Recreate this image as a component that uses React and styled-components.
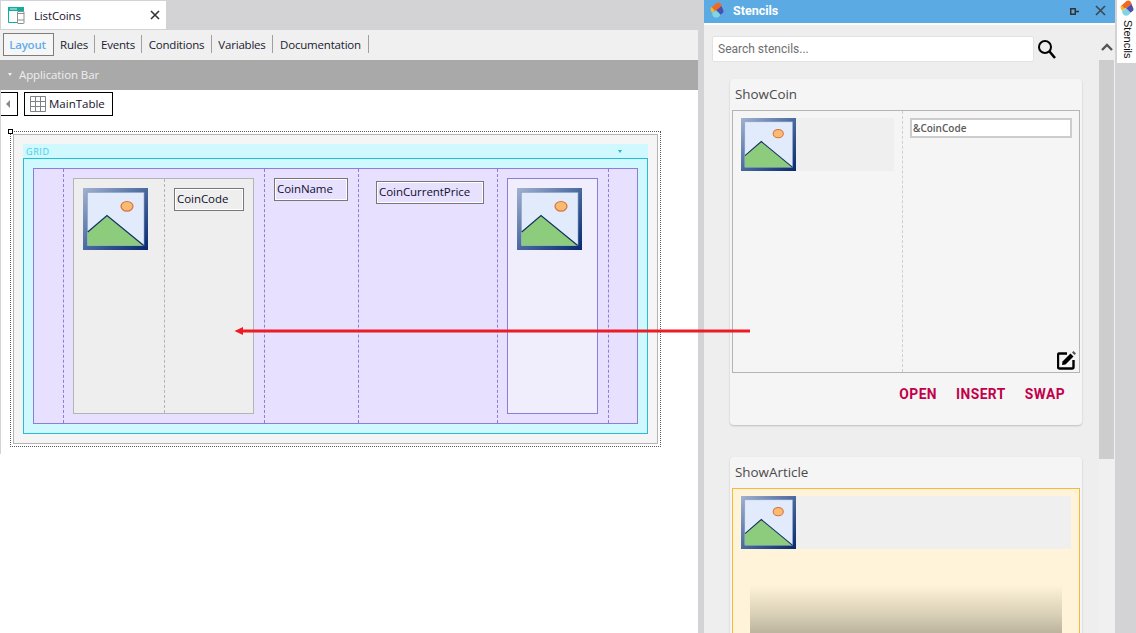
import React from 'react'
import styled, { createGlobalStyle } from 'styled-components'

const GlobalStyle = createGlobalStyle`
    html, body {
        margin: 0;
        padding: 0;
        background: #fff;
    }
    * {
        box-sizing: border-box;
    }
`

const Page = styled.div`
    position: relative;
    display: flex;
    width: 1136px;
    height: 633px;
    overflow: hidden;
    background: #d3d2d4;
    font-family: "Open Sans", "Noto Sans", sans-serif;
`

const Editor = styled.div`
    display: flex;
    flex-direction: column;
    width: 698px;
    height: 100%;
    background: #fff;
`

const DocStrip = styled.div`
    flex: none;
    height: 30px;
    padding: 1px 0 1px 1px;
    background: #d3d2d4;
`

const DocTab = styled.div`
    display: flex;
    align-items: center;
    width: 165px;
    height: 28px;
    padding-left: 7px;
    background: #fff;
    color: #1a1030;
    font-size: 11.5px;
    letter-spacing: -0.15px;
`

const DocTitle = styled.span`
    margin-left: 9px;
    flex: 1;
`

const DocClose = styled.svg`
    width: 10px;
    height: 10px;
    margin-right: 6px;
`

const ViewTabs = styled.div`
    flex: none;
    display: flex;
    align-items: center;
    height: 30px;
    padding: 0 0 2px 3px;
    background: #f0f0f0;
`

const ViewTab = styled.div`
    display: flex;
    align-items: center;
    justify-content: center;
    height: ${p => (p.$active ? '23px' : '18px')};
    width: ${p => p.$w}px;
    padding-right: ${p => (p.$active ? '2px' : '0')};
    font-size: 11.5px;
    letter-spacing: -0.2px;
    font-weight: ${p => (p.$active ? 600 : 400)};
    color: ${p => (p.$active ? '#62aeef' : '#1a1a30')};
    background: ${p => (p.$active ? '#f6f6f6' : 'transparent')};
    border: ${p => (p.$active ? '1px solid #7d7d7d' : 'none')};
    border-right: 1px solid ${p => (p.$active ? '#7d7d7d' : '#a0a0a0')};
`

const AppBar = styled.div`
    flex: none;
    display: flex;
    align-items: center;
    gap: 7px;
    height: 30px;
    padding: 0 0 1px 8px;
    background: #a9a9a9;
    color: #eeeeee;
    font-size: 11.5px;
    letter-spacing: -0.1px;
`

const AppBarCaret = styled.span`
    width: 0;
    height: 0;
    border-left: 2.5px solid transparent;
    border-right: 2.5px solid transparent;
    border-top: 3px solid #f0f0f0;
`

const DesignArea = styled.div`
    flex: none;
    height: 364px;
    padding-top: 2px;
    border-left: 1px solid #d3d2d4;
`

const Toolbar = styled.div`
    display: flex;
    gap: 6px;
    height: 24px;
`

const BackButton = styled.div`
    display: flex;
    align-items: center;
    justify-content: center;
    width: 17px;
    padding-right: 3px;
    background: #fff;
    border: 1px solid #000;
    border-left: none;
`

const BackCaret = styled.span`
    width: 0;
    height: 0;
    border-top: 4px solid transparent;
    border-bottom: 4px solid transparent;
    border-right: 4px solid #8a8a8a;
`

const TableButton = styled.div`
    display: flex;
    align-items: center;
    gap: 3px;
    width: 89px;
    padding: 0 0 1px 5px;
    background: #fff;
    border: 1px solid #000;
    color: #14102a;
    font-size: 11.5px;
`

const Surface = styled.div`
    position: relative;
    width: 651px;
    height: 316px;
    margin: 15px 0 0 9px;
    padding: 2px;
    border: 1px dotted #555;
`

const Handle = styled.span`
    position: absolute;
    left: -3px;
    top: -3px;
    width: 5px;
    height: 5px;
    background: #fff;
    border: 1px solid #000;
`

const SurfaceInner = styled.div`
    width: 645px;
    height: 310px;
    padding: 9px;
    background: #f5f5f5;
    border: 1px solid #b4b4b4;
`

const GridHead = styled.div`
    display: flex;
    align-items: center;
    justify-content: space-between;
    height: 14px;
    padding: 0 26px 0 3px;
    background: #cff8ff;
    color: #3dcfe6;
    font-size: 9px;
    letter-spacing: 0.6px;
`

const GridCaret = styled.span`
    width: 0;
    height: 0;
    border-left: 2.5px solid transparent;
    border-right: 2.5px solid transparent;
    border-top: 3px solid #21b5d6;
`

const GridBody = styled.div`
    height: 276px;
    padding: 9px;
    background: #cff8ff;
    border: 1px solid #25bcd6;
`

const Columns = styled.div`
    display: grid;
    grid-template-columns: 30px 201px 94px 139px 111px 28px;
    height: 256px;
    background: #e7e1ff;
    border: 1px solid #8a7fd8;
`

const Column = styled.div`
    padding: ${p => p.$pad || '0'};
    border-right: ${p => (p.$last ? 'none' : '1px dashed #8a7fd8')};
`

const GroupCell = styled.div`
    display: grid;
    grid-template-columns: 91px 1fr;
    width: 181px;
    height: 236px;
    background: #eeeeee;
    border: 1px solid #b4b4b4;
`

const GroupPart = styled.div`
    padding: 9px;
    border-right: ${p => (p.$split ? '1px dashed #b4b4b4' : 'none')};
`

const ImageCell = styled.div`
    width: 91px;
    height: 236px;
    padding: 9px;
    background: #f0edfd;
    border: 1px solid #8a7fd8;
`

const Attribute = styled.div`
    display: flex;
    align-items: center;
    width: ${p => p.$w}px;
    height: 23px;
    padding: 0 0 2px 2px;
    border: 1px solid #777;
    outline: 1px solid #fff;
    outline-offset: -2px;
    color: #10102a;
    font-size: 11.5px;
    letter-spacing: -0.05px;
    white-space: nowrap;
`

const Arrow = styled.svg`
    position: absolute;
    left: 234px;
    top: 326px;
`

const Gutter = styled.div`
    flex: none;
    width: 6px;
`

const StencilPanel = styled.div`
    display: flex;
    flex-direction: column;
    width: 411px;
    height: 100%;
    background: #eeeeee;
`

const PanelHead = styled.div`
    flex: none;
    display: flex;
    align-items: center;
    height: 25px;
    padding: 0 9px 2px 6px;
    background: #5baae4;
    border-bottom: 2px solid #fff;
    color: #fff;
    font-family: Roboto, "Liberation Sans", sans-serif;
    font-size: 12.5px;
    font-weight: 700;
`

const PanelTitle = styled.span`
    flex: 1;
    margin-left: 9px;
`

const PinIcon = styled.svg`
    margin: 1px 16px 0 0;
`

const PanelBody = styled.div`
    flex: 1;
    display: flex;
    min-height: 0;
`

const Scroller = styled.div`
    flex: 1;
    min-width: 0;
    padding: 11px 0 0 8px;
    overflow: hidden;
`

const SearchRow = styled.div`
    display: flex;
    align-items: center;
    gap: 3px;
    height: 26px;
    margin-bottom: 17px;
`

const SearchBox = styled.div`
    display: flex;
    align-items: center;
    width: 322px;
    height: 26px;
    padding-left: 5px;
    background: #fff;
    border: 1px solid #e2e2e2;
    border-radius: 2px;
    color: #6e6e6e;
    font-family: Roboto, "Liberation Sans", sans-serif;
    font-size: 12px;
`

const Card = styled.div`
    width: 352px;
    height: ${p => p.$h}px;
    margin: 0 0 32px 18px;
    padding: 0 2px;
    background: #f5f5f5;
    border-radius: 4px;
    box-shadow: 0 1px 2px rgba(0, 0, 0, 0.2);
`

const CardTitle = styled.div`
    display: flex;
    align-items: center;
    height: 31px;
    padding: 0 0 2px 3px;
    color: #4a4a4a;
    font-size: 13.4px;
`

const Preview = styled.div`
    display: grid;
    grid-template-columns: ${p => (p.$split ? '170px 1fr' : '1fr')};
    height: ${p => p.$h}px;
    position: relative;
    background: ${p => (p.$warm ? '#fff4d9' : '#f5f5f5')};
    border: 1px solid ${p => (p.$warm ? '#f5b83d' : '#b4b4b4')};
`

const PreviewPart = styled.div`
    padding: 7px ${p => (p.$inset ? '7px' : '8px')};
    border-right: ${p => (p.$split ? '1px dashed #cfcfcf' : 'none')};
`

const ImageStrip = styled.div`
    height: 53px;
    background: #efefef;
`

const PreviewInput = styled.div`
    display: flex;
    align-items: center;
    height: 20px;
    padding-left: 1px;
    background: #fff;
    border: 2px solid #cccccc;
    color: #5a5a5a;
    font-size: 10px;
    font-weight: 600;
`

const FadeBlock = styled.div`
    height: 60px;
    margin: 36px 9px 0;
    background: linear-gradient(#fff4d9, #d8cfb6 50%, #aaa28f);
`

const EditIcon = styled.svg`
    position: absolute;
    right: 2px;
    bottom: 2px;
`

const CardActions = styled.div`
    display: flex;
    justify-content: flex-end;
    gap: 19px;
    padding: 13px 15px 0 0;
`

const CardAction = styled.span`
    color: #c2004b;
    font-family: Roboto, "Liberation Sans", sans-serif;
    font-size: 13.8px;
    font-weight: 700;
    letter-spacing: 0.45px;
`

const ScrollTrack = styled.div`
    flex: none;
    width: 16px;
    background: #f0f0f0;
`

const ScrollUp = styled.div`
    display: flex;
    align-items: center;
    justify-content: center;
    height: 35px;
    padding-top: 9px;
    background: #eeeeee;
`

const ScrollThumb = styled.div`
    width: 15px;
    height: 399px;
    background: #cdcdcd;
`

const SideRail = styled.div`
    flex: none;
    width: 21px;
    padding-left: 2px;
`

const SideTab = styled.div`
    display: flex;
    flex-direction: column;
    align-items: center;
    height: 63px;
    background: #fff;
`

const SideLabel = styled.span`
    margin: 3px 0 0 2px;
    writing-mode: vertical-rl;
    color: #111;
    font-family: "Liberation Sans", sans-serif;
    font-size: 11px;
`

const Logo = ({ size = 14 }) => (
    <svg width={size} height={size * 1.2} viewBox="0 0 14 17">
        <path d="M1.5 5.5 L6.5 1 Q9 -0.3 10.5 1.5 L12 4 L6 8.5 L3 8.5Z" fill="#f26a21" />
        <path d="M0.5 7 Q0.7 5.5 1.5 5 L5 9 L2 11 Q0.5 9 0.5 7Z" fill="#f7b733" />
        <path d="M6 8.5 L11.5 4 L13.5 8.5 Q14 10.5 12.5 11.5 L10.5 13Z" fill="#4a4fb0" />
        <path d="M2 11 L6.5 8.5 L10.5 13 L9 15 Q6 17 3.5 15 Q2 13.5 2 11Z" fill="#7fd6e2" />
    </svg>
)

const Placeholder = ({ w = 65, h = 62 }) => (
    <svg width={w} height={h} viewBox="0 0 65 62" preserveAspectRatio="none" style={{ display: 'block' }}>
        <defs>
            <linearGradient id="frame" x1="0" y1="0" x2="1" y2="1">
                <stop offset="0" stopColor="#a3b3d0" />
                <stop offset="0.5" stopColor="#4a6a9f" />
                <stop offset="1" stopColor="#07286f" />
            </linearGradient>
        </defs>
        <rect width="65" height="62" fill="url(#frame)" />
        <rect x="4.5" y="4.5" width="56.5" height="53" fill="#e1ebfc" stroke="#8ea3c6" strokeWidth="0.6" />
        <path d="M4.7 44 L24 27.5 L60.7 57.5 L4.7 57.5Z" fill="#8dcb7d" />
        <path d="M4.7 44 L24 27.5 L60.7 57.5" fill="none" stroke="#14305f" strokeWidth="1.2" />
        <ellipse cx="44" cy="18.3" rx="6" ry="4.8" fill="#f9bb72" stroke="#d9703c" strokeWidth="1.2" />
    </svg>
)

const viewTabs = [
    { label: 'Layout', w: 51, active: true },
    { label: 'Rules', w: 41 },
    { label: 'Events', w: 47 },
    { label: 'Conditions', w: 70 },
    { label: 'Variables', w: 61 },
    { label: 'Documentation', w: 96 }
]

export default function App() {
    return (
        <Page>
            <GlobalStyle />
            <Editor>
                <DocStrip>
                    <DocTab>
                        <svg width="17" height="17" viewBox="0 0 17 17">
                            <path d="M0.5 0.5 H15.5 V15.5 H0.5Z" fill="#fff" stroke="#0fae9f" />
                            <rect x="0" y="0" width="16" height="4" fill="#0fae9f" />
                            <rect x="2" y="1.5" width="7" height="1" fill="#d8f4f0" />
                            <rect x="9.5" y="4.5" width="6.5" height="12" rx="0.5" fill="#fff" stroke="#8f8f8f" />
                            <rect x="9.5" y="12.5" width="6.5" height="1" fill="#8f8f8f" />
                            <rect x="9.5" y="6" width="6.5" height="1" fill="#8f8f8f" />
                        </svg>
                        <DocTitle>ListCoins</DocTitle>
                        <DocClose viewBox="0 0 10 10">
                            <path d="M1 1 L9 9 M9 1 L1 9" stroke="#333" strokeWidth="1.6" />
                        </DocClose>
                    </DocTab>
                </DocStrip>
                <ViewTabs>
                    {viewTabs.map(tab => (
                        <ViewTab key={tab.label} $active={tab.active} $w={tab.w}>{tab.label}</ViewTab>
                    ))}
                </ViewTabs>
                <AppBar>
                    <AppBarCaret />
                    Application Bar
                </AppBar>
                <DesignArea>
                    <Toolbar>
                        <BackButton><BackCaret /></BackButton>
                        <TableButton>
                            <svg width="16" height="16" viewBox="0 0 16 16">
                                <path d="M0.5 0.5 H15.5 V15.5 H0.5Z M5.5 0.5 V15.5 M10.5 0.5 V15.5 M0.5 5.5 H15.5 M0.5 10.5 H15.5" fill="none" stroke="#7d8488" />
                            </svg>
                            MainTable
                        </TableButton>
                    </Toolbar>
                    <Surface>
                        <Handle />
                        <SurfaceInner>
                            <GridHead>GRID<GridCaret /></GridHead>
                            <GridBody>
                                <Columns>
                                    <Column />
                                    <Column $pad="9px">
                                        <GroupCell>
                                            <GroupPart $split><Placeholder /></GroupPart>
                                            <GroupPart><Attribute $w={70}>CoinCode</Attribute></GroupPart>
                                        </GroupCell>
                                    </Column>
                                    <Column $pad="9px"><Attribute $w={74}>CoinName</Attribute></Column>
                                    <Column $pad="12px 0 0 17px"><Attribute $w={108}>CoinCurrentPrice</Attribute></Column>
                                    <Column $pad="9px">
                                        <ImageCell><Placeholder /></ImageCell>
                                    </Column>
                                    <Column $last />
                                </Columns>
                            </GridBody>
                        </SurfaceInner>
                    </Surface>
                </DesignArea>
            </Editor>
            <Gutter />
            <StencilPanel>
                <PanelHead>
                    <Logo />
                    <PanelTitle>Stencils</PanelTitle>
                    <PinIcon width="9" height="7" viewBox="0 0 9 7">
                        <path d="M0.75 0.75 H5.25 V6.25 H0.75Z M5.25 3.5 H9" fill="none" stroke="#333" strokeWidth="1.5" />
                    </PinIcon>
                    <svg width="11" height="11" viewBox="0 0 11 11">
                        <path d="M1 1 L10 10 M10 1 L1 10" stroke="#3c4a56" strokeWidth="1.7" />
                    </svg>
                </PanelHead>
                <PanelBody>
                    <Scroller>
                        <SearchRow>
                            <SearchBox>Search stencils...</SearchBox>
                            <svg width="20" height="21" viewBox="0 0 20 21">
                                <circle cx="8" cy="8" r="6" fill="none" stroke="#000" strokeWidth="2" />
                                <path d="M12.5 12.5 L18 19" stroke="#000" strokeWidth="2.6" />
                            </svg>
                        </SearchRow>
                        <Card $h={346}>
                            <CardTitle>ShowCoin</CardTitle>
                            <Preview $split $h={263}>
                                <PreviewPart $split>
                                    <ImageStrip><Placeholder w={55} h={53} /></ImageStrip>
                                </PreviewPart>
                                <PreviewPart $inset>
                                    <PreviewInput>&amp;CoinCode</PreviewInput>
                                </PreviewPart>
                                <EditIcon width="20" height="20" viewBox="0 0 20 20">
                                    <path d="M10 3.5 H2.5 Q1 3.5 1 5 V17 Q1 18.5 2.5 18.5 H15 Q16.5 18.5 16.5 17 V10" fill="none" stroke="#000" strokeWidth="2.4" />
                                    <path d="M5.5 11.5 L13.5 3.5 L16.5 6.5 L8.5 14.5 L5 15Z" fill="#000" />
                                    <path d="M15 2.5 L16.5 1 L19 3.5 L17.5 5Z" fill="#555" />
                                </EditIcon>
                            </Preview>
                            <CardActions>
                                <CardAction>OPEN</CardAction>
                                <CardAction>INSERT</CardAction>
                                <CardAction>SWAP</CardAction>
                            </CardActions>
                        </Card>
                        <Card $h={260}>
                            <CardTitle>ShowArticle</CardTitle>
                            <Preview $warm $h={230}>
                                <PreviewPart>
                                    <ImageStrip><Placeholder w={55} h={53} /></ImageStrip>
                                    <FadeBlock />
                                </PreviewPart>
                            </Preview>
                        </Card>
                    </Scroller>
                    <ScrollTrack>
                        <ScrollUp>
                            <svg width="12" height="8" viewBox="0 0 12 8">
                                <path d="M1 7 L6 2 L11 7" fill="none" stroke="#555" strokeWidth="2.4" />
                            </svg>
                        </ScrollUp>
                        <ScrollThumb />
                    </ScrollTrack>
                </PanelBody>
            </StencilPanel>
            <SideRail>
                <SideTab>
                    <Logo />
                    <SideLabel>Stencils</SideLabel>
                </SideTab>
            </SideRail>
            <Arrow width="517" height="10" viewBox="0 0 517 10">
                <path d="M8 5 H516" stroke="#ed1c24" strokeWidth="3" />
                <path d="M0.5 5 L9 1 V9Z" fill="#ed1c24" />
            </Arrow>
        </Page>
    )
}
